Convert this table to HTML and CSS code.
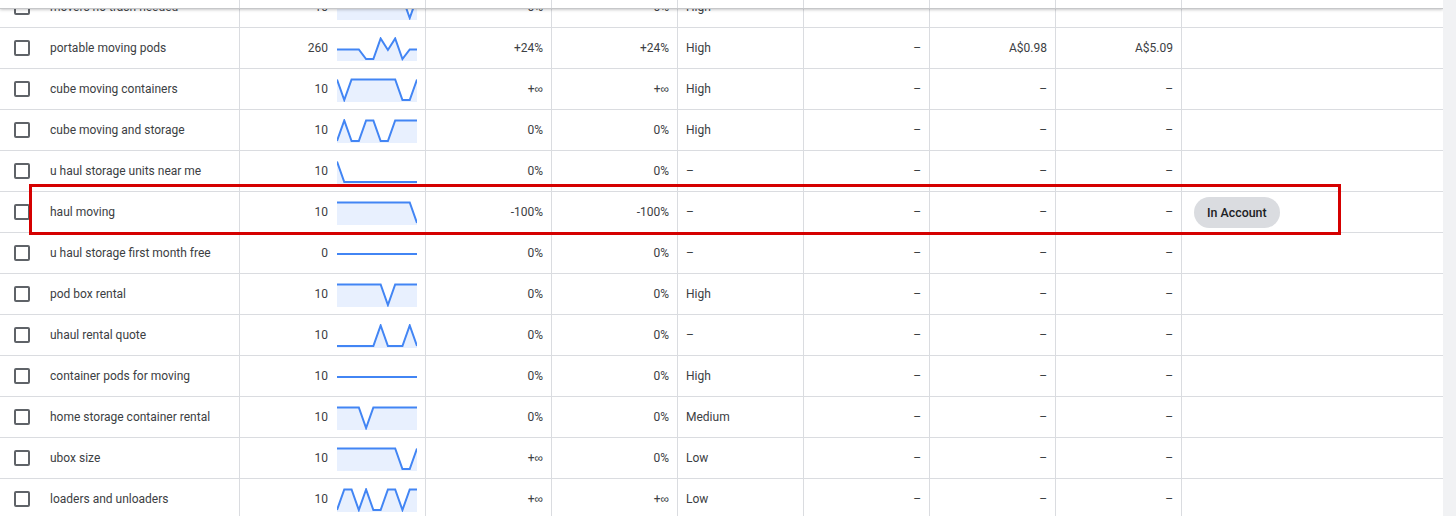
FILE: index.html
```html
<!DOCTYPE html>
<html lang="en">
<head>
<meta charset="utf-8">
<title>Keyword ideas</title>
<link rel="stylesheet" href="styles.css">
</head>
<body>
<div class="page">
  <div class="table">
    <div class="header">
      <span></span><span></span><span></span><span></span><span></span><span></span><span></span><span></span><span class="last"></span>
    </div>
    <div class="rows">

      <div class="row">
        <div class="c kw"><span class="cb"></span><span>movers no trash needed</span></div>
        <div class="c vol"><span>10</span><svg class="spark" viewBox="0 0 80 24"><polygon class="area" points="0,1.5 65.45,1.5 72.73,22 80,1.5 80,24 0,24"/><polyline class="line" points="0,1.5 65.45,1.5 72.73,22 80,1.5"/></svg></div>
        <div class="c num">0%</div>
        <div class="c num">0%</div>
        <div class="c">High</div>
        <div class="c num">–</div>
        <div class="c num">–</div>
        <div class="c num">–</div>
        <div class="c last"></div>
      </div>

      <div class="row">
        <div class="c kw"><span class="cb"></span><span>portable moving pods</span></div>
        <div class="c vol"><span>260</span><svg class="spark" viewBox="0 0 80 24"><polygon class="area" points="0,12.5 21.82,12.5 29.09,22 36.36,22 43.64,1.5 50.91,13 58.18,1.5 65.45,22 72.73,12.5 80,12.5 80,24 0,24"/><polyline class="line" points="0,12.5 21.82,12.5 29.09,22 36.36,22 43.64,1.5 50.91,13 58.18,1.5 65.45,22 72.73,12.5 80,12.5"/></svg></div>
        <div class="c num">+24%</div>
        <div class="c num">+24%</div>
        <div class="c">High</div>
        <div class="c num">–</div>
        <div class="c num">A$0.98</div>
        <div class="c num">A$5.09</div>
        <div class="c last"></div>
      </div>

      <div class="row">
        <div class="c kw"><span class="cb"></span><span>cube moving containers</span></div>
        <div class="c vol"><span>10</span><svg class="spark" viewBox="0 0 80 24"><polygon class="area" points="0,1.5 7.27,22 14.55,1.5 58.18,1.5 65.45,22 72.73,22 80,1.5 80,24 0,24"/><polyline class="line" points="0,1.5 7.27,22 14.55,1.5 58.18,1.5 65.45,22 72.73,22 80,1.5"/></svg></div>
        <div class="c num">+<span class="inf">∞</span></div>
        <div class="c num">+<span class="inf">∞</span></div>
        <div class="c">High</div>
        <div class="c num">–</div>
        <div class="c num">–</div>
        <div class="c num">–</div>
        <div class="c last"></div>
      </div>

      <div class="row">
        <div class="c kw"><span class="cb"></span><span>cube moving and storage</span></div>
        <div class="c vol"><span>10</span><svg class="spark" viewBox="0 0 80 24"><polygon class="area" points="0,22 7.27,1.5 14.55,22 21.82,22 29.09,1.5 36.36,1.5 43.64,22 50.91,22 58.18,1.5 80,1.5 80,24 0,24"/><polyline class="line" points="0,22 7.27,1.5 14.55,22 21.82,22 29.09,1.5 36.36,1.5 43.64,22 50.91,22 58.18,1.5 80,1.5"/></svg></div>
        <div class="c num">0%</div>
        <div class="c num">0%</div>
        <div class="c">High</div>
        <div class="c num">–</div>
        <div class="c num">–</div>
        <div class="c num">–</div>
        <div class="c last"></div>
      </div>

      <div class="row">
        <div class="c kw"><span class="cb"></span><span>u haul storage units near me</span></div>
        <div class="c vol"><span>10</span><svg class="spark" viewBox="0 0 80 24"><polygon class="area" points="0,1.5 7.27,22 80,22 80,24 0,24"/><polyline class="line" points="0,1.5 7.27,22 80,22"/></svg></div>
        <div class="c num">0%</div>
        <div class="c num">0%</div>
        <div class="c">–</div>
        <div class="c num">–</div>
        <div class="c num">–</div>
        <div class="c num">–</div>
        <div class="c last"></div>
      </div>

      <div class="row">
        <div class="c kw"><span class="cb"></span><span>haul moving</span></div>
        <div class="c vol"><span>10</span><svg class="spark" viewBox="0 0 80 24"><polygon class="area" points="0,1.5 72.73,1.5 80,22 80,24 0,24"/><polyline class="line" points="0,1.5 72.73,1.5 80,22"/></svg></div>
        <div class="c num">-100%</div>
        <div class="c num">-100%</div>
        <div class="c">–</div>
        <div class="c num">–</div>
        <div class="c num">–</div>
        <div class="c num">–</div>
        <div class="c last"><span class="chip">In Account</span></div>
        <div class="highlight"></div>
      </div>

      <div class="row">
        <div class="c kw"><span class="cb"></span><span>u haul storage first month free</span></div>
        <div class="c vol"><span>0</span><svg class="spark" viewBox="0 0 80 24"><polyline class="line" points="0,12 80,12"/></svg></div>
        <div class="c num">0%</div>
        <div class="c num">0%</div>
        <div class="c">–</div>
        <div class="c num">–</div>
        <div class="c num">–</div>
        <div class="c num">–</div>
        <div class="c last"></div>
      </div>

      <div class="row">
        <div class="c kw"><span class="cb"></span><span>pod box rental</span></div>
        <div class="c vol"><span>10</span><svg class="spark" viewBox="0 0 80 24"><polygon class="area" points="0,1.5 43.64,1.5 50.91,22 58.18,1.5 80,1.5 80,24 0,24"/><polyline class="line" points="0,1.5 43.64,1.5 50.91,22 58.18,1.5 80,1.5"/></svg></div>
        <div class="c num">0%</div>
        <div class="c num">0%</div>
        <div class="c">High</div>
        <div class="c num">–</div>
        <div class="c num">–</div>
        <div class="c num">–</div>
        <div class="c last"></div>
      </div>

      <div class="row">
        <div class="c kw"><span class="cb"></span><span>uhaul rental quote</span></div>
        <div class="c vol"><span>10</span><svg class="spark" viewBox="0 0 80 24"><polygon class="area" points="0,22 36.36,22 43.64,1.5 50.91,22 65.45,22 72.73,1.5 80,22 80,24 0,24"/><polyline class="line" points="0,22 36.36,22 43.64,1.5 50.91,22 65.45,22 72.73,1.5 80,22"/></svg></div>
        <div class="c num">0%</div>
        <div class="c num">0%</div>
        <div class="c">–</div>
        <div class="c num">–</div>
        <div class="c num">–</div>
        <div class="c num">–</div>
        <div class="c last"></div>
      </div>

      <div class="row">
        <div class="c kw"><span class="cb"></span><span>container pods for moving</span></div>
        <div class="c vol"><span>10</span><svg class="spark" viewBox="0 0 80 24"><polyline class="line" points="0,12 80,12"/></svg></div>
        <div class="c num">0%</div>
        <div class="c num">0%</div>
        <div class="c">High</div>
        <div class="c num">–</div>
        <div class="c num">–</div>
        <div class="c num">–</div>
        <div class="c last"></div>
      </div>

      <div class="row">
        <div class="c kw"><span class="cb"></span><span>home storage container rental</span></div>
        <div class="c vol"><span>10</span><svg class="spark" viewBox="0 0 80 24"><polygon class="area" points="0,1.5 21.82,1.5 29.09,22 36.36,1.5 80,1.5 80,24 0,24"/><polyline class="line" points="0,1.5 21.82,1.5 29.09,22 36.36,1.5 80,1.5"/></svg></div>
        <div class="c num">0%</div>
        <div class="c num">0%</div>
        <div class="c">Medium</div>
        <div class="c num">–</div>
        <div class="c num">–</div>
        <div class="c num">–</div>
        <div class="c last"></div>
      </div>

      <div class="row">
        <div class="c kw"><span class="cb"></span><span>ubox size</span></div>
        <div class="c vol"><span>10</span><svg class="spark" viewBox="0 0 80 24"><polygon class="area" points="0,1.5 58.18,1.5 65.45,22 72.73,22 80,1.5 80,24 0,24"/><polyline class="line" points="0,1.5 58.18,1.5 65.45,22 72.73,22 80,1.5"/></svg></div>
        <div class="c num">+<span class="inf">∞</span></div>
        <div class="c num">0%</div>
        <div class="c">Low</div>
        <div class="c num">–</div>
        <div class="c num">–</div>
        <div class="c num">–</div>
        <div class="c last"></div>
      </div>

      <div class="row">
        <div class="c kw"><span class="cb"></span><span>loaders and unloaders</span></div>
        <div class="c vol"><span>10</span><svg class="spark" viewBox="0 0 80 24"><polygon class="area" points="0,22 7.27,1.5 14.55,1.5 21.82,22 29.09,1.5 36.36,22 43.64,22 50.91,1.5 58.18,1.5 65.45,22 72.73,1.5 80,1.5 80,24 0,24"/><polyline class="line" points="0,22 7.27,1.5 14.55,1.5 21.82,22 29.09,1.5 36.36,22 43.64,22 50.91,1.5 58.18,1.5 65.45,22 72.73,1.5 80,1.5"/></svg></div>
        <div class="c num">+<span class="inf">∞</span></div>
        <div class="c num">+<span class="inf">∞</span></div>
        <div class="c">Low</div>
        <div class="c num">–</div>
        <div class="c num">–</div>
        <div class="c num">–</div>
        <div class="c last"></div>
      </div>

    </div>
  </div>
  <div class="scrollbar"></div>
</div>
</body>
</html>
```

FILE: styles.css
```css
html, body {
  margin: 0;
  padding: 0;
  background: #ffffff;
}

body {
  font-family: Roboto, "Liberation Sans", "DejaVu Sans", sans-serif;
  font-size: 12px;
  color: #3c4043;
}

.page {
  display: flex;
  width: 1456px;
  height: 516px;
  overflow: hidden;
}

.table {
  position: relative;
  width: 1443px;
  height: 516px;
  overflow: hidden;
  flex: none;
}

.scrollbar {
  flex: none;
  width: 13px;
  height: 516px;
  background: #f1f2f4;
}

.header {
  position: absolute;
  top: 0;
  left: 0;
  width: 1443px;
  height: 9px;
  box-sizing: border-box;
  background: #ffffff;
  border-bottom: 1px solid #c6c7c9;
  box-shadow: 0 1px 3px rgba(60, 64, 67, 0.28);
  z-index: 3;
  display: grid;
  grid-template-columns: 240px 186px repeat(6, 126px) 261px;
}

.header span {
  border-right: 1px solid #dadce0;
}

.header span.last {
  border-right: none;
}

.rows {
  margin-top: -13px;
}

.row {
  position: relative;
  display: grid;
  grid-template-columns: 240px 186px repeat(6, 126px) 261px;
  height: 41px;
  box-sizing: border-box;
  border-bottom: 1px solid #dadce0;
}

.c {
  display: flex;
  align-items: center;
  box-sizing: border-box;
  padding: 0 8px;
  border-right: 1px solid #dadce0;
  white-space: nowrap;
  min-width: 0;
}

.c.last {
  border-right: none;
  padding-left: 12px;
}

.num {
  justify-content: flex-end;
}

.inf {
  font-family: "Liberation Sans", sans-serif;
  font-size: 12px;
}

.kw {
  padding-left: 14px;
  gap: 20px;
}

.cb {
  width: 16px;
  height: 16px;
  box-sizing: border-box;
  border: 2px solid #5f6368;
  border-radius: 2px;
  flex: none;
}

.vol {
  justify-content: flex-end;
  gap: 9px;
}

.spark {
  display: block;
  width: 80px;
  height: 24px;
  margin-top: 2px;
  flex: none;
}

.spark .area {
  fill: #e8f0fe;
  stroke: none;
}

.spark .line {
  fill: none;
  stroke: #4285f4;
  stroke-width: 2;
  stroke-linejoin: miter;
}

.chip {
  display: inline-flex;
  align-items: center;
  height: 31px;
  padding: 0 13px;
  border-radius: 16px;
  background: #dadce0;
  color: #202124;
  font-weight: 500;
  font-size: 12.4px;
}

.highlight {
  position: absolute;
  left: 29px;
  top: -8px;
  width: 1312px;
  height: 51px;
  box-sizing: border-box;
  border: 3px solid #d50000;
  z-index: 2;
  pointer-events: none;
}
```
